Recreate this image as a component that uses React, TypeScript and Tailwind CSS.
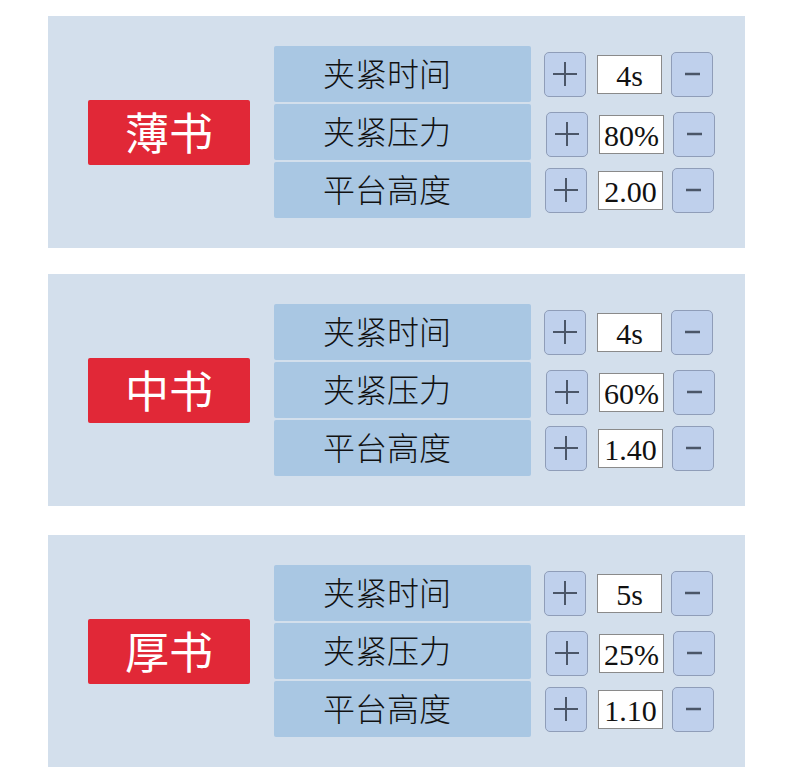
import { Fragment } from 'react';

type Row = {
  name: string;
  value: string;
  // small per-row nudges seen in the layout
  ctrlClass: string;
};

type Preset = {
  title: string;
  rows: Row[];
};

const presets: Preset[] = [
  {
    title: '薄书',
    rows: [
      { name: '夹紧时间', value: '4s', ctrlClass: 'ml-[13px] mt-[0px]' },
      { name: '夹紧压力', value: '80%', ctrlClass: 'ml-[15px] mt-[4px]' },
      { name: '平台高度', value: '2.00', ctrlClass: 'ml-[14px] mt-[0px]' },
    ],
  },
  {
    title: '中书',
    rows: [
      { name: '夹紧时间', value: '4s', ctrlClass: 'ml-[13px] mt-[0px]' },
      { name: '夹紧压力', value: '60%', ctrlClass: 'ml-[15px] mt-[4px]' },
      { name: '平台高度', value: '1.40', ctrlClass: 'ml-[14px] mt-[0px]' },
    ],
  },
  {
    title: '厚书',
    rows: [
      { name: '夹紧时间', value: '5s', ctrlClass: 'ml-[13px] mt-[0px]' },
      { name: '夹紧压力', value: '25%', ctrlClass: 'ml-[15px] mt-[4px]' },
      { name: '平台高度', value: '1.10', ctrlClass: 'ml-[14px] mt-[0px]' },
    ],
  },
];

const cjk = { fontFamily: '"Noto Sans CJK SC", "Noto Sans", sans-serif' };
const serif = { fontFamily: '"Liberation Serif", "DejaVu Serif", serif' };

const StepButton = ({ kind }: { kind: 'plus' | 'minus' }) => (
  <button className="flex h-[45px] w-[42px] items-center justify-center rounded-[5px] border border-[#8f9db8] bg-[#bfd0ec]">
    <svg width="26" height="26" viewBox="0 0 26 26" fill="none" stroke="#4b5668" strokeWidth="2">
      {kind === 'plus' && <line x1="13" y1="1" x2="13" y2="25" />}
      {kind === 'plus' ? (
        <line x1="1" y1="13" x2="25" y2="13" />
      ) : (
        <line x1="6" y1="13" x2="21" y2="13" strokeWidth="2.5" />
      )}
    </svg>
  </button>
);

const ParamRow = ({ row }: { row: Row }) => (
  <div className="flex items-center">
    <div
      className="flex h-[56px] w-[257px] items-center rounded-[2px] bg-[#a9c7e3] pb-[5px] pl-[49px] text-[32px] font-light text-[#111]"
      style={cjk}
    >
      {row.name}
    </div>
    <div className={`flex items-center ${row.ctrlClass}`}>
      <StepButton kind="plus" />
      <div
        className="ml-[11px] flex h-[39px] w-[65px] items-center justify-center border border-[#8a8a8a] bg-white pt-[3px] text-[30px] leading-none text-[#111]"
        style={serif}
      >
        {row.value}
      </div>
      <div className="ml-[9px]">
        <StepButton kind="minus" />
      </div>
    </div>
  </div>
);

export default function App() {
  return (
    <div className="min-h-[776px] w-[790px] bg-white pt-[16px]">
      {presets.map((p, i) => (
        <Fragment key={p.title}>
          <div
            className={`ml-[48px] flex h-[232px] w-[697px] items-center bg-[#d3dfec] pl-[40px] ${
              i === 1 ? 'mt-[26px]' : i === 2 ? 'mt-[29px]' : ''
            }`}
          >
            <div
              className="flex h-[65px] w-[162px] items-center justify-center rounded-[2px] bg-[#e12837] pb-[3px] text-[44px] font-normal text-white"
              style={cjk}
            >
              {p.title}
            </div>
            <div className="ml-[24px] flex flex-col gap-[2px]">
              {p.rows.map(r => (
                <ParamRow key={r.name} row={r} />
              ))}
            </div>
          </div>
        </Fragment>
      ))}
    </div>
  );
}
